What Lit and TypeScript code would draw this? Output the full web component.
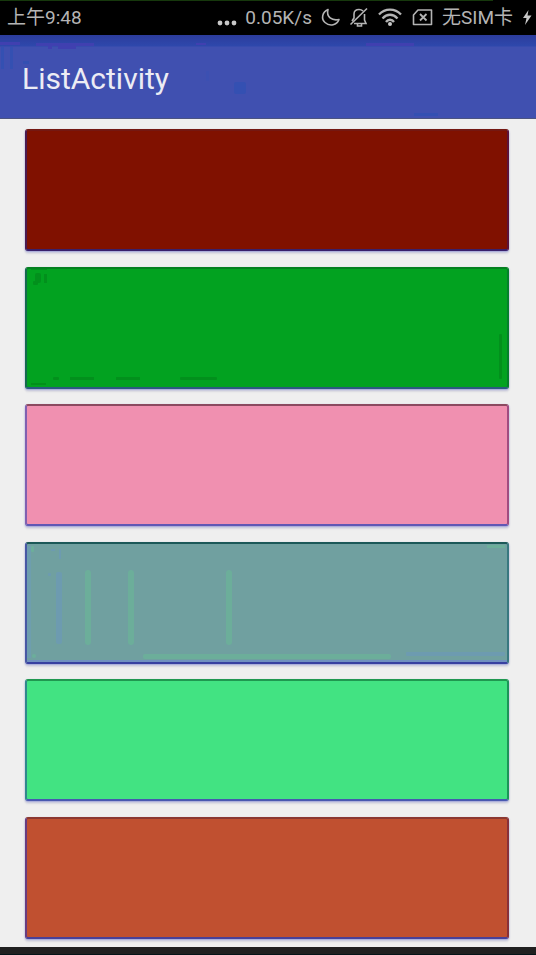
import { LitElement, html, css, svg, nothing } from "lit";
import { customElement, property } from "lit/decorators.js";

type Mark = { x: number; y: number; w: number; h: number; r?: number; fill: string };
type Item = { color: string; top: string; right: string; bottom: string; left: string; marks?: Mark[] };

const DARK = "#02901c";
const MINT = "#6cae9a";
const BLUE = "#6d9bb0";

const ITEMS: Item[] = [
  { color: "#801100", top: "#741812", right: "#5c1238", bottom: "#38206c", left: "#4a1a50" },
  {
    color: "#02a220", top: "#04801f", right: "#04802a", bottom: "#2c5a80", left: "#146a4c",
    marks: [
      { x: 10, y: 6, w: 6, h: 10, r: 2, fill: DARK },
      { x: 8, y: 14, w: 5, h: 4, r: 1, fill: DARK },
      { x: 19, y: 7, w: 3, h: 9, fill: DARK },
      { x: 6, y: 2, w: 16, h: 1, fill: DARK },
      { x: 28, y: 110, w: 6, h: 3, r: 1, fill: DARK },
      { x: 45, y: 110, w: 24, h: 3, fill: DARK },
      { x: 91, y: 110, w: 24, h: 3, fill: DARK },
      { x: 155, y: 110, w: 37, h: 3, r: 1, fill: DARK },
      { x: 6, y: 116, w: 15, h: 2, fill: DARK },
      { x: 474, y: 67, w: 3, h: 45, r: 1, fill: DARK },
    ],
  },
  { color: "#f090b0", top: "#8c4a60", right: "#a04c80", bottom: "#6058b4", left: "#8060b0" },
  {
    color: "#70a0a0", top: "#1c5858", right: "#387880", bottom: "#3840a0", left: "#4858a4",
    marks: [
      { x: 2, y: 4, w: 4, h: 112, fill: "#6e9eae" },
      { x: 6, y: 4, w: 3, h: 6, r: 1, fill: MINT },
      { x: 26, y: 7, w: 4, h: 2, fill: BLUE },
      { x: 34, y: 7, w: 2, h: 10, fill: BLUE },
      { x: 23, y: 31, w: 3, h: 3, r: 1, fill: BLUE },
      { x: 31, y: 30, w: 6, h: 72, r: 2, fill: BLUE },
      { x: 60, y: 28, w: 6, h: 75, r: 3, fill: MINT },
      { x: 103, y: 28, w: 6, h: 75, r: 3, fill: MINT },
      { x: 201, y: 28, w: 6, h: 75, r: 3, fill: MINT },
      { x: 7, y: 112, w: 4, h: 4, r: 2, fill: MINT },
      { x: 118, y: 112, w: 248, h: 5, r: 2, fill: MINT },
      { x: 381, y: 110, w: 99, h: 4, r: 1, fill: BLUE },
      { x: 462, y: 3, w: 18, h: 3, fill: MINT },
      { x: 2, y: 118, w: 480, h: 2, fill: "#7090c0" },
    ],
  },
  { color: "#42e382", top: "#209850", right: "#1c9458", bottom: "#4858b0", left: "#30888c" },
  { color: "#c05030", top: "#8c3830", right: "#883038", bottom: "#484098", left: "#683c80" },
];

const VIOLET = "#4040b0";
const AZURE = "#3450b2";

const HEADER_MARKS: Mark[] = [
  { x: 1, y: 12, w: 3, h: 22, fill: AZURE },
  { x: 10, y: 12, w: 3, h: 22, fill: AZURE },
  { x: 0, y: 7, w: 20, h: 3, fill: VIOLET },
  { x: 36, y: 8, w: 58, h: 3, fill: VIOLET },
  { x: 48, y: 11, w: 4, h: 3, fill: VIOLET },
  { x: 58, y: 11, w: 18, h: 3, fill: VIOLET },
  { x: 196, y: 8, w: 10, h: 2, fill: VIOLET },
  { x: 366, y: 8, w: 48, h: 3, fill: VIOLET },
  { x: 23, y: 26, w: 6, h: 3, fill: AZURE },
  { x: 206, y: 36, w: 3, h: 10, fill: "#3c50b2" },
  { x: 234, y: 47, w: 12, h: 12, r: 2, fill: AZURE },
  { x: 414, y: 78, w: 24, h: 3, fill: AZURE },
];

const drawMarks = (marks: Mark[]) => html`
  <svg class="marks" aria-hidden="true">
    ${marks.map((m) => svg`<rect x=${m.x} y=${m.y} width=${m.w} height=${m.h} rx=${m.r ?? 0} fill=${m.fill} />`)}
  </svg>
`;

@customElement("status-bar")
export class StatusBar extends LitElement {
  static styles = css`
    :host {
      display: flex;
      align-items: center;
      box-sizing: border-box;
      height: 35px;
      padding: 0 4px 0 7px;
      background: linear-gradient(90deg, #16380c 92%, #000 92%) top / 100% 1px no-repeat #000;
      color: #b4b4b4;
      font: 19px/24px Roboto, "Noto Sans CJK SC", sans-serif;
      white-space: nowrap;
    }
    .time { margin-right: auto; }
    .sim { margin-left: 9px; }
    svg { display: block; flex: none; fill: none; stroke: #b4b4b4; stroke-width: 2; }
    .solid { fill: #c8c8c8; stroke: none; }
    .dots { margin-right: 8px; }
    .moon { margin-left: 9px; }
    .bell { margin-left: 8px; }
    .wifi { margin-left: 8px; }
    .card { margin-left: 9px; }
    .bolt { margin-left: 9px; }
  `;

  render() {
    return html`
      <span class="time">上午9:48</span>
      <svg class="dots solid" width="20" height="24" viewBox="0 0 20 24">
        <circle cx="3" cy="17" r="2.4" /><circle cx="10" cy="17" r="2.4" /><circle cx="17" cy="17" r="2.4" />
      </svg>
      <span>0.05K/s</span>
      <svg class="moon" width="20" height="24" viewBox="0 0 20 24">
        <path d="M7 3.5C1 6 0 13 4 16.500C9 21 16 19 18 13.500C11 15 5 11 7 3.500Z" stroke-width="1.600" stroke-linejoin="round" />
      </svg>
      <svg class="bell" width="20" height="24" viewBox="0 0 20 24">
        <path d="M3 15L5 12V8C5 5 7 3.500 10 3.500C12 3.500 13 4 14 5M15.500 8V14L17 17.500H5M8.500 18V20H12.500V18M1.500 18.500L18 2.500" stroke-width="1.600" />
      </svg>
      <svg class="wifi" width="26" height="24" viewBox="0 0 26 24">
        <path d="M2 8.500C8 2 18 2 24 8.500M5.500 12.500C10 7.500 16 7.500 20.500 12.500M9 16C11 13 15 13 17 16" stroke-width="2.300" />
        <circle class="solid" cx="13" cy="18" r="2" />
      </svg>
      <svg class="card" width="21" height="24" viewBox="0 0 21 24">
        <path d="M6 4H19.500V18.500H1.500V9Z" stroke-width="1.600" stroke-linejoin="round" />
        <path d="M8 8L14.500 14.500M14.500 8L8 14.500" stroke-width="1.800" />
      </svg>
      <span class="sim">无SIM卡</span>
      <svg class="bolt solid" width="10" height="24" viewBox="0 0 10 24">
        <path d="M6.500 4L1 12H4.500L3 19L9.500 9.500H5.500Z" />
      </svg>
    `;
  }
}

@customElement("color-card")
export class ColorCard extends LitElement {
  @property({ attribute: false }) item!: Item;

  static styles = css`
    :host { display: block; }
    .card {
      position: relative;
      box-sizing: border-box;
      height: 122px;
      border-style: solid;
      border-width: 2px;
      border-radius: 3px;
      box-shadow: 0 1px 2px #9ca0d8, 0 3px 2px #dcdce0;
      overflow: hidden;
    }
    .marks { position: absolute; top: -2px; left: -2px; width: 484px; height: 122px; }
  `;

  render() {
    const { color, top, right, bottom, left, marks } = this.item;
    return html`
      <div class="card" style="background-color:${color};border-color:${top} ${right} ${bottom} ${left}">
        ${marks ? drawMarks(marks) : nothing}
      </div>
    `;
  }
}

@customElement("app-root")
export class AppRoot extends LitElement {
  static styles = css`
    :host {
      display: flex;
      flex-direction: column;
      min-height: 100vh;
      background: #efefef;
    }
    header {
      position: relative;
      display: flex;
      align-items: center;
      box-sizing: border-box;
      height: 84px;
      padding: 5px 22px 0;
      border-bottom: 1px solid #4c5480;
      background: linear-gradient(#2c3c9c, #2e48ac 11px, #4050b0 12px);
    }
    .marks { position: absolute; inset: 0; width: 100%; height: 100%; }
    h1 {
      position: relative;
      margin: 0;
      color: #ececf4;
      font: 400 30px/40px Roboto, sans-serif;
    }
    ul {
      flex: 1;
      margin: 0;
      padding: 10px 27px 8px 25px;
      list-style: none;
    }
    li { margin-bottom: 15px; }
    li:nth-child(odd) { margin-bottom: 16px; }
    li:last-child { margin-bottom: 0; }
    footer { height: 7px; background: #202020; border-bottom: 1px solid #041418; }
  `;

  render() {
    return html`
      <status-bar></status-bar>
      <header>
        ${drawMarks(HEADER_MARKS)}
        <h1>ListActivity</h1>
      </header>
      <ul>
        ${ITEMS.map((item) => html`<li><color-card .item=${item}></color-card></li>`)}
      </ul>
      <footer></footer>
    `;
  }
}
